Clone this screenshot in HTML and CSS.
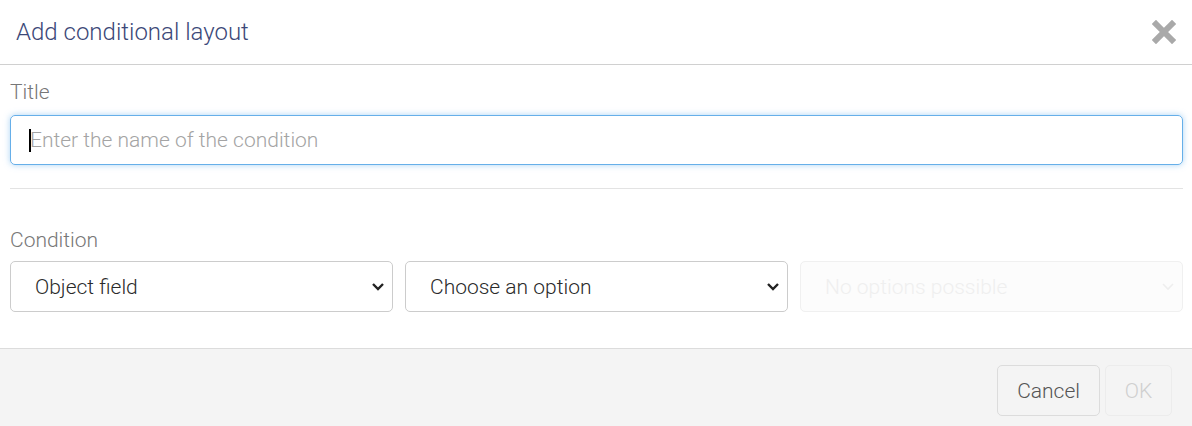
FILE: index.html
```html
<!DOCTYPE html>
<html>
<head>
<meta charset="utf-8">
<link rel="stylesheet" href="styles.css">
</head>
<body>
<div class="modal">
  <div class="header">
    <h1 class="title">Add conditional layout</h1>
    <svg class="close" viewBox="0 0 24 24" width="24" height="24"><path d="M4 4 L20 20 M20 4 L4 20" stroke="#a9a9a9" stroke-width="6" stroke-linecap="square"/></svg>
  </div>
  <div class="body">
    <div class="label">Title</div>
    <div class="input"><span class="caret"></span><span class="placeholder">Enter the name of the condition</span></div>
    <div class="sep"></div>
    <div class="label cond">Condition</div>
    <div class="selects">
      <div class="select"><span>Object field</span><svg class="chev" viewBox="0 0 14 10" width="14" height="10"><path d="M2 2 L7 7 L12 2" fill="none" stroke="#222" stroke-width="2.4"/></svg></div>
      <div class="select"><span>Choose an option</span><svg class="chev" viewBox="0 0 14 10" width="14" height="10"><path d="M2 2 L7 7 L12 2" fill="none" stroke="#222" stroke-width="2.4"/></svg></div>
      <div class="select disabled"><span>No options possible</span><svg class="chev" viewBox="0 0 14 10" width="14" height="10"><path d="M2 2 L7 7 L12 2" fill="none" stroke="#eee" stroke-width="1.6"/></svg></div>
    </div>
  </div>
  <div class="footer">
    <div class="btn">Cancel</div>
    <div class="btn ok">OK</div>
  </div>
</div>
</body>
</html>
```
FILE: styles.css
```css
* { box-sizing: border-box; }
html, body { margin: 0; padding: 0; background: #fff; }
body { font-family: Roboto, "Liberation Sans", sans-serif; font-weight: 300; width: 1192px; height: 426px; overflow: hidden; }
.modal { display: flex; flex-direction: column; height: 426px; }
.header { height: 65px; border-bottom: 1px solid #d0d0d0; display: flex; align-items: center; justify-content: space-between; padding: 0 16px 0 16px; }
.title { margin: 0; font-size: 24px; font-weight: 300; color: #3c4878; }
.close { display: block; }
.body { padding: 16px 9px 36px 10px; }
.label { font-size: 21px; color: #777; line-height: 22px; height: 22px; }
.input { margin-top: 12px; height: 50px; border: 1px solid #66afe9; border-radius: 5px; box-shadow: 0 0 6px rgba(102,175,233,0.55); display: flex; align-items: center; padding-left: 18px; }
.caret { width: 2px; height: 23px; background: #000; margin-right: -1px; }
.placeholder { font-size: 21px; color: #a4a4a4; }
.sep { margin-top: 23px; border-top: 1px solid #e3e3e3; }
.cond { margin-top: 40px; }
.selects { margin-top: 10px; display: flex; gap: 12px; }
.select { flex: 1; height: 51px; border: 1px solid #ccc; border-radius: 5px; display: flex; align-items: center; justify-content: space-between; padding: 0 7px 0 24px; font-size: 21px; }
.select span { color: #2a2a2a; }
.select.disabled { border-color: #f0f0f0; background: #fcfcfc; }
.select.disabled span { color: #efefef; }
.footer { flex: 1; background: #f4f4f4; border-top: 1px solid #dcdcdc; display: flex; justify-content: flex-end; align-items: flex-start; padding: 16px 20px 0 0; gap: 5px; }
.btn { height: 51px; border: 1px solid #dcdcdc; border-radius: 5px; font-size: 21px; color: #555; display: flex; align-items: center; justify-content: center; padding: 0 19px; }
.btn.ok { border-color: #ececec; color: #cfcfcf; width: 67px; }
```
